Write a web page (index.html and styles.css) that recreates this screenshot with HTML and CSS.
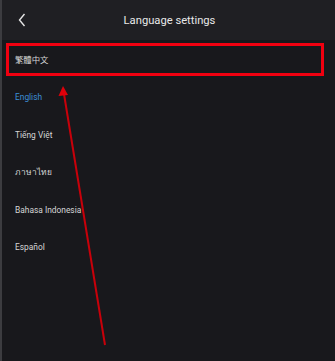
FILE: index.html
```html
<!DOCTYPE html>
<html>
	<head>
		<meta charset="UTF-8">
		<title>Language settings</title>
		<link rel="stylesheet" href="styles.css">
	</head>
	<body>
		<div class="screen">
			<div class="top">
				<svg class="back" width="8" height="14" viewBox="0 0 8 14"><path d="M6.5 1 L1.5 7 L6.5 13" fill="none" stroke="#e6e6e6" stroke-width="1.4"/></svg>
				<span class="title">Language settings</span>
			</div>
			<ul class="langs">
				<li>繁體中文</li>
				<li class="on">English</li>
				<li>Tiếng Việt</li>
				<li>ภาษาไทย</li>
				<li>Bahasa Indonesia</li>
				<li>Español</li>
			</ul>
			<!-- annotation -->
			<span class="mark"></span>
			<svg class="arrow" width="335" height="361" viewBox="0 0 335 361">
				<line x1="105" y1="345" x2="64" y2="94" stroke="#c8000a" stroke-width="2"/>
				<polygon points="63,86 58.5,96 68,95" fill="#e0000a"/>
			</svg>
		</div>
	</body>
</html>
```

FILE: styles.css
```css
*{
	margin:0;
	padding:0;
	box-sizing:border-box;
}
body{
	background:#18181c;
	font-family:Roboto,"Noto Sans","Noto Sans CJK TC",sans-serif;
}
.screen{
	position:relative;
	width:335px;
	height:361px;
	border-left:2px solid #3c3c40;
	background:#18181c;
	overflow:hidden;
}
.top{
	height:40px;
	background:#1f1f23;
	display:flex;
	align-items:center;
	justify-content:center;
	position:relative;
}
.back{
	position:absolute;
	left:16px;
	top:13px;
}
.title{
	color:#e8e8e8;
	font-size:11.2px;
	margin-left:2px;
}
.langs{
	list-style:none;
	padding-top:1.5px;
}
.langs li{
	height:37.6px;
	line-height:37.6px;
	padding-left:13px;
	color:#d6d6d6;
	font-size:8.4px;
}
.langs .on{
	color:#3d8fd6;
}
.mark{
	position:absolute;
	left:4px;
	top:43px;
	width:318px;
	height:33px;
	border:3px solid #f00010;
}
.arrow{
	position:absolute;
	left:-2px;
	top:0;
}
```
